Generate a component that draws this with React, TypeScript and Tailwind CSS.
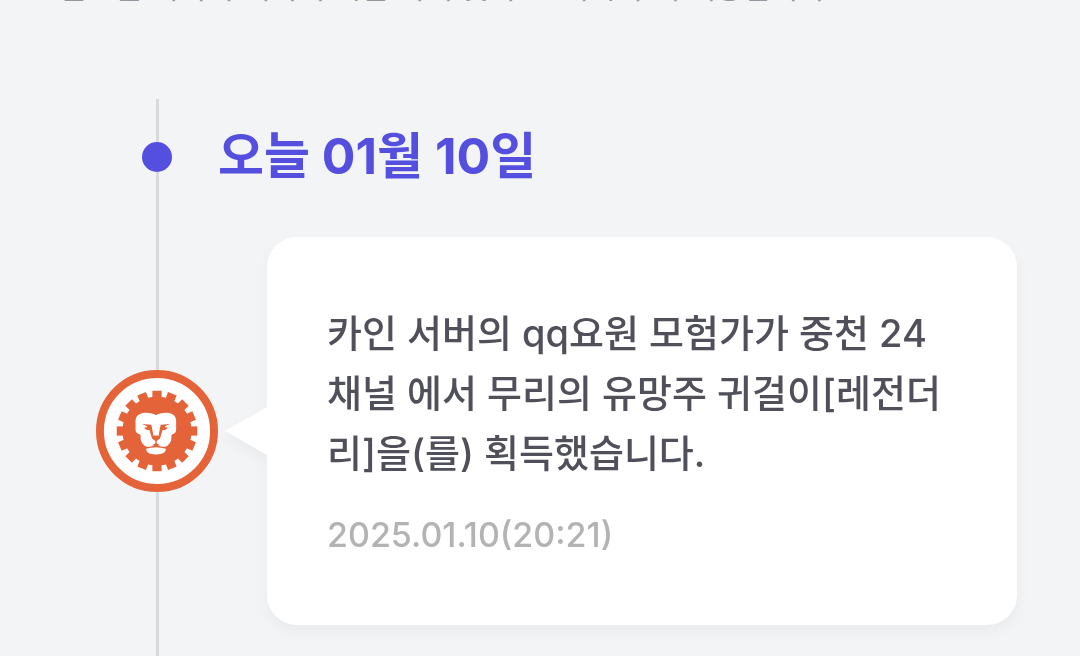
const TEETH = Array.from({ length: 16 }, (_, i) => i * 22.5);

const LionBadge = () => (
  <svg viewBox="33 28 370 370" className="size-[122px] shrink-0" role="img" aria-label="레전더리">
    <circle cx="218" cy="213" r="173" fill="#fff" stroke="#e56339" strokeWidth="24" />
    <circle cx="218" cy="213" r="105" fill="#e56339" />
    {TEETH.map((angle) => (
      <rect key={angle} x="204" y="91" width="28" height="30" fill="#e56339" transform={`rotate(${angle} 218 213)`} />
    ))}
    <g transform="translate(135 135)">
      {/* head */}
      <path
        fill="#fff"
        d="M80 30C68 23 46 20 30 27C20 32 17 42 18 54V74C18 82 23 86 31 88C35 92 32 98 34 106C37 114 42 122 52 126C60 127 72 123 80 118C88 123 100 127 108 126C118 122 123 114 126 106C128 98 125 92 129 88C137 86 141 82 141 74V54C142 42 139 32 130 27C114 20 92 23 80 30Z"
      />
      {/* chin */}
      <path fill="#fff" d="M50 132C60 130 70 127 80 127C90 127 100 130 110 132C110 142 102 149 80 149C58 149 50 142 50 132Z" />
      {/* eyes */}
      <path fill="#e56339" d="M38 57L66 59L72 91L66 94L60 75C54 76 48 73 44 68L54 66C50 61 44 60 38 57Z" />
      <path fill="#e56339" d="M122 57L94 59L88 91L94 94L100 75C106 76 112 73 116 68L106 66C110 61 116 60 122 57Z" />
      {/* nose and mouth */}
      <path fill="#e56339" d="M65 92H95L92 101L82 108V115L92 121H68L78 115V108L68 101Z" />
    </g>
  </svg>
);

const Line = ({ className }: { className: string }) => <div className={`w-[3px] bg-[#d9dadd] ${className}`} />;

const App = () => {
  return (
    <main className="flex min-h-screen flex-col overflow-hidden bg-[#f3f4f6] pr-[63px] pl-24 font-['Inter','Noto_Sans_CJK_KR',sans-serif]">
      <p className="-mt-8 -ml-9 h-[33px] text-[30px] leading-[38px] whitespace-nowrap text-[#96979d]">
        본으론 이미지 데이터 시간 이내 및 주요 게시 후에 제공됩니다.
      </p>

      <section className="mt-[98px] flex flex-1 flex-col">
        <div className="flex">
          <div className="flex w-[122px] shrink-0 flex-col items-center">
            <Line className="h-[43px]" />
            <div className="size-[30px] shrink-0 rounded-full bg-[#554fe0]" />
            <Line className="flex-1" />
          </div>
          <h2 className="mt-[25px] mb-[49px] text-[50px] leading-[64px] font-bold text-[#554fe0]">오늘 01월 10일</h2>
        </div>

        <div className="flex">
          <div className="flex w-[122px] shrink-0 flex-col items-center">
            <Line className="flex-1" />
            <LionBadge />
            <Line className="flex-1" />
          </div>
          <div className="ml-[7px] flex flex-1 items-center drop-shadow-[0_6px_6px_rgba(0,0,0,0.04)]">
            <svg viewBox="0 0 42 48" className="h-12 w-[42px] shrink-0" aria-hidden="true">
              <path d="M0 24L42 0V48Z" fill="#fff" />
            </svg>
            <article className="flex-1 rounded-[30px] bg-white px-[60px] pt-[66px] pb-[60px]">
              <p className="text-[38px] leading-[60px] font-medium text-[#50505a]">
                카인 서버의 qq요원 모험가가 중천 24채널 에서 무리의 유망주 귀걸이[레전더리]을(를) 획득했습니다.
              </p>
              <time dateTime="2025-01-10T20:21" className="mt-[22px] block text-[34px] leading-[60px] font-medium text-[#b3b3b3]">
                2025.01.10(20:21)
              </time>
            </article>
          </div>
        </div>

        <div className="flex w-[122px] flex-1 flex-col items-center">
          <Line className="flex-1" />
        </div>
      </section>
    </main>
  );
};

export default App;
